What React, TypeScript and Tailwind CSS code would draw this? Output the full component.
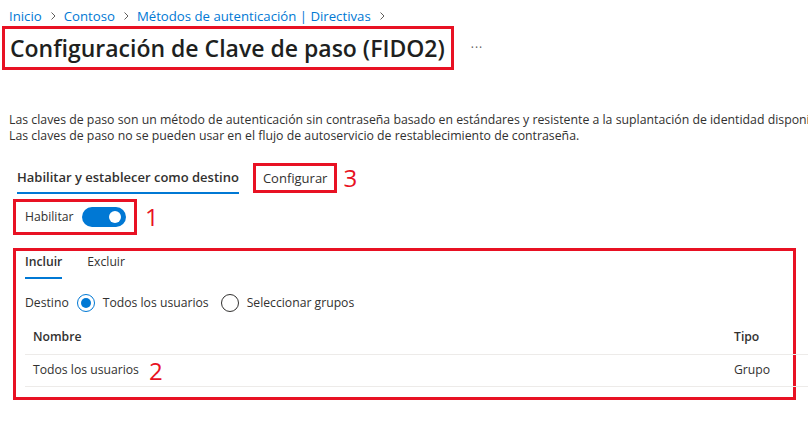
import React from "react";

function Chevron() {
  return (
    <svg width="12" height="12" viewBox="0 0 12 12" className="mx-[5px]">
      <path d="M4.5 2.5 L8 6 L4.5 9.5" fill="none" stroke="#605e5c" strokeWidth="1" />
    </svg>
  );
}

export default function App() {
  return (
    <div className="w-[808px] h-[427px] overflow-hidden bg-white font-['Open_Sans',sans-serif] text-[#323130]">
      {/* Breadcrumb */}
      <div className="flex items-center pl-[9px] pt-[6px] h-[26px] text-[13.2px] leading-[20px] text-[#0078d4]">
        <span>Inicio</span>
        <Chevron />
        <span>Contoso</span>
        <Chevron />
        <span>Métodos de autenticación | Directivas</span>
        <Chevron />
      </div>

      {/* Title */}
      <div className="flex items-center">
        <div className="ml-[2px] border-[3px] border-[#e81123] pl-[5px] pr-[6px] h-[44px] flex items-center">
          <h1 className="text-[23px] font-semibold leading-[30px] text-[#201f1e] whitespace-nowrap">
            Configuración de Clave de paso (FIDO2)
          </h1>
        </div>
        <span className="ml-[17px] text-[12px] text-[#605e5c] tracking-[1px]">···</span>
      </div>

      {/* Description */}
      <div className="mt-[42px] pl-[9px] text-[12.3px] leading-[16px] whitespace-nowrap text-[#323130]">
        <p>Las claves de paso son un método de autenticación sin contraseña basado en estándares y resistente a la suplantación de identidad disponible.</p>
        <p>Las claves de paso no se pueden usar en el flujo de autoservicio de restablecimiento de contraseña.</p>
      </div>

      {/* Tabs */}
      <div className="mt-[18px] h-[32px] flex items-center pl-[17px]">
        <div className="flex flex-col h-[32px] justify-between">
          <span className="text-[13px] font-semibold leading-[30px] text-[#323130] whitespace-nowrap">
            Habilitar y establecer como destino
          </span>
          <div className="h-[2px] bg-[#0078d4]" />
        </div>
        <div className="ml-[14px] border-[3px] border-[#e81123] h-[30px] px-[7px] flex items-center">
          <span className="text-[13px] leading-[18px] text-[#323130]">Configurar</span>
        </div>
        <span className="ml-[6px] text-[24px] leading-[24px] text-[#e81123]">3</span>
      </div>

      {/* Habilitar toggle */}
      <div className="mt-[5px] flex items-center pl-[13px]">
        <div className="border-[3px] border-[#e81123] h-[36px] w-[124px] flex items-center pl-[9px]">
          <span className="text-[12.2px] text-[#323130]">Habilitar</span>
          <div className="ml-[8px] w-[44px] h-[20px] rounded-full bg-[#0078d4] flex items-center justify-end pr-[5px]">
            <div className="w-[12px] h-[12px] rounded-full bg-white" />
          </div>
        </div>
        <span className="ml-[8px] text-[24px] leading-[24px] text-[#e81123]">1</span>
      </div>

      {/* Include box */}
      <div className="mt-[13px] ml-[13px]">
        <div className="w-[783px] h-[152px] border-[3px] border-[#e81123] pl-[9px]">
          <div className="flex items-end gap-[25px] pt-[1px]">
            <div className="flex flex-col">
              <span className="text-[12.2px] font-semibold leading-[20px] text-[#323130]">Incluir</span>
              <div className="mt-[5px] h-[2px] bg-[#0078d4]" />
            </div>
            <div className="flex flex-col">
              <span className="text-[12.2px] leading-[20px] text-[#323130]">Excluir</span>
              <div className="mt-[5px] h-[2px]" />
            </div>
          </div>

          <div className="mt-[15px] h-[18px] flex items-center text-[12.2px] text-[#323130]">
            <span>Destino</span>
            <div className="ml-[8px] w-[18px] h-[18px] rounded-full border border-[#0078d4] flex items-center justify-center">
              <div className="w-[10px] h-[10px] rounded-full bg-[#0078d4]" />
            </div>
            <span className="ml-[8px]">Todos los usuarios</span>
            <div className="ml-[12px] w-[18px] h-[18px] rounded-full border border-[#323130]" />
            <span className="ml-[8px]">Seleccionar grupos</span>
          </div>

          <div className="mt-[9px] w-[783px] text-[12.2px]">
            <div className="flex items-center h-[34px] border-b border-[#edebe9] pl-[8px]">
              <span className="w-[701px] font-semibold">Nombre</span>
              <span className="font-semibold">Tipo</span>
            </div>
            <div className="flex items-center h-[32px] border-b border-[#edebe9] pl-[8px]">
              <span className="w-[701px] flex items-center">
                Todos los usuarios
                <span className="ml-[10px] text-[24px] leading-[24px] text-[#e81123]">2</span>
              </span>
              <span>Grupo</span>
            </div>
          </div>
        </div>
      </div>
    </div>
  );
}
